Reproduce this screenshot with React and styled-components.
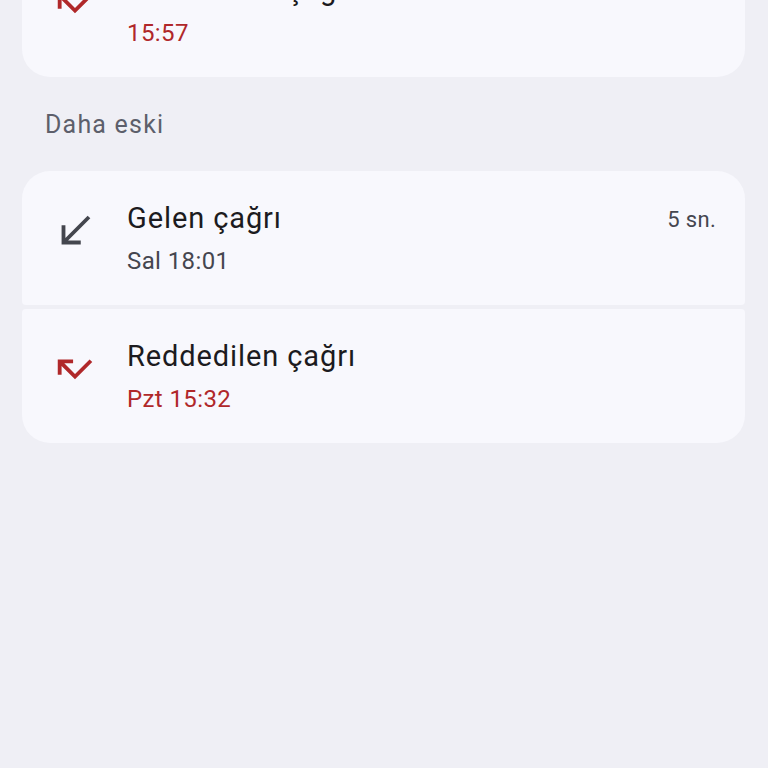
import styled, { createGlobalStyle } from 'styled-components';

const GlobalStyle = createGlobalStyle`
  html, body {
    margin: 0;
    padding: 0;
    background: #efeff5;
    font-family: Roboto, "Noto Sans", sans-serif;
    overflow: hidden;
  }
`;

const Page = styled.div`
  width: 768px;
  height: 768px;
  background: #efeff5;
  overflow: hidden;
`;

const List = styled.div`
  display: flex;
  flex-direction: column;
  padding: 0 23px 0 22px;
  margin-top: -57px;
`;

const Group = styled.div`
  display: flex;
  flex-direction: column;
  gap: 4px;
`;

const SectionTitle = styled.div`
  height: 94px;
  display: flex;
  align-items: center;
  padding-left: 23px;
  font-size: 25px;
  letter-spacing: 1.2px;
  color: #5d5f6b;
`;

const Row = styled.div`
  display: flex;
  align-items: center;
  height: 134px;
  background: #f8f8fd;
  padding: 0 29px 0 30px;
  border-radius: ${({ $first, $last }) =>
    `${$first ? 28 : 4}px ${$first ? 28 : 4}px ${$last ? 28 : 4}px ${$last ? 28 : 4}px`};
`;

const IconBox = styled.div`
  width: 46px;
  height: 46px;
  flex: none;
  margin: 0 29px 14px 0;
  color: ${({ $missed }) => ($missed ? '#b0282a' : '#44464e')};
  svg {
    display: block;
    width: 46px;
    height: 46px;
  }
`;

const Text = styled.div`
  flex: 1;
  display: flex;
  flex-direction: column;
  gap: 10px;
`;

const Title = styled.div`
  font-size: 29px;
  line-height: 35px;
  letter-spacing: 0.9px;
  color: #1c1b20;
`;

const Sub = styled.div`
  font-size: 24px;
  line-height: 30px;
  letter-spacing: 0.4px;
  color: ${({ $missed }) => ($missed ? '#b0282a' : '#45464f')};
`;

const Duration = styled.div`
  align-self: flex-start;
  margin-top: 35px;
  font-size: 22px;
  line-height: 28px;
  letter-spacing: 0.3px;
  color: #45464f;
`;

const ReceivedIcon = () => (
  <svg viewBox="0 0 24 24" fill="currentColor">
    <path d="M20 5.41L18.59 4 7 15.59V9H5v10h10v-2H8.41z" />
  </svg>
);

const MissedIcon = () => (
  <svg viewBox="0 0 24 24" fill="currentColor">
    <path d="M19.59 7L12 14.59 6.41 9H11V7H3v8h2v-4.59l7 7 9-9z" />
  </svg>
);

function CallRow({ type, title, time, duration, first, last }) {
  const missed = type === 'missed';
  return (
    <Row $first={first} $last={last}>
      <IconBox $missed={missed}>{missed ? <MissedIcon /> : <ReceivedIcon />}</IconBox>
      <Text>
        <Title>{title}</Title>
        <Sub $missed={missed}>{time}</Sub>
      </Text>
      {duration && <Duration>{duration}</Duration>}
    </Row>
  );
}

export default function App() {
  return (
    <Page>
      <GlobalStyle />
      <List>
        <Group>
          <CallRow type="missed" title="Reddedilen çağrı" time="15:57" first last />
        </Group>
        <SectionTitle>Daha eski</SectionTitle>
        <Group>
          <CallRow type="received" title="Gelen çağrı" time="Sal 18:01" duration="5 sn." first />
          <CallRow type="missed" title="Reddedilen çağrı" time="Pzt 15:32" last />
        </Group>
      </List>
    </Page>
  );
}
